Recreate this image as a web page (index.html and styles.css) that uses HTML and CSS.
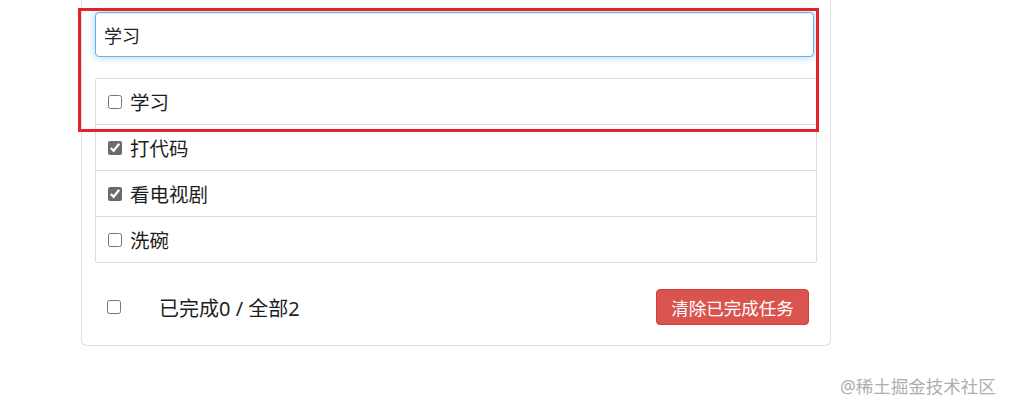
FILE: index.html
```html
<!DOCTYPE html>
<html lang="zh-CN">
<head>
<meta charset="utf-8">
<title>Todo</title>
<link rel="stylesheet" href="styles.css">
</head>
<body>
<div class="page">
  <div class="todo">
    <input class="todo-input" type="text" value="学习">
    <ul class="todo-list">
      <li class="todo-item"><input type="checkbox" class="chk"><span>学习</span></li>
      <li class="todo-item"><input type="checkbox" class="chk" checked><span>打代码</span></li>
      <li class="todo-item"><input type="checkbox" class="chk" checked><span>看电视剧</span></li>
      <li class="todo-item"><input type="checkbox" class="chk"><span>洗碗</span></li>
    </ul>
    <div class="todo-footer">
      <label class="footer-left"><input type="checkbox" class="chk"><span class="footer-text">已完成0 / 全部2</span></label>
      <button class="btn-danger" type="button">清除已完成任务</button>
    </div>
  </div>
  <div class="highlight"></div>
  <div class="watermark">@稀土掘金技术社区</div>
</div>
</body>
</html>
```
FILE: styles.css
```css
* { box-sizing: border-box; }
html, body {
  margin: 0;
  padding: 0;
  background: #fff;
  font-family: "Noto Sans", "Noto Sans CJK SC", sans-serif;
  color: #333;
}
.page {
  position: relative;
  width: 1015px;
  height: 411px;
  overflow: hidden;
}
.todo {
  margin-left: 81px;
  width: 750px;
  border: 1px solid #ddd;
  border-top: none;
  border-radius: 0 0 6px 6px;
  padding: 12px 13px 20px 13px;
}
.todo-input {
  display: block;
  width: 719px;
  height: 45px;
  padding: 0 8px;
  font-family: inherit;
  font-size: 18px;
  color: #222;
  border: 1px solid #66afe9;
  border-radius: 4px;
  outline: none;
  box-shadow: inset 0 1px 1px rgba(0,0,0,.075), 0 0 8px rgba(102,175,233,.6);
}
.todo-list {
  list-style: none;
  margin: 21px 0 0 0;
  padding: 0;
  border: 1px solid #ddd;
  border-radius: 2px;
}
.todo-item {
  display: flex;
  align-items: center;
  height: 46px;
  padding-left: 12px;
  border-bottom: 1px solid #ddd;
  font-size: 19.5px;
  color: #1e1e1e;
}
.todo-item:last-child {
  height: 45px;
  border-bottom: none;
}
.chk {
  width: 14px;
  height: 14px;
  margin: 0 8px 0 0;
  accent-color: #6b6b6b;
}
.todo-footer {
  display: flex;
  align-items: center;
  justify-content: space-between;
  margin-top: 26px;
  padding: 0 8px 0 12px;
}
.footer-left {
  display: flex;
  align-items: center;
}
.footer-left .chk {
  margin-right: 38px;
}
.footer-text {
  font-size: 20px;
  color: #1e1e1e;
}
.btn-danger {
  width: 153px;
  height: 36px;
  padding: 0;
  font-family: inherit;
  font-size: 17.5px;
  color: #fff;
  background: #d9534f;
  border: 1px solid #d43f3a;
  border-radius: 4px;
}
.highlight {
  position: absolute;
  left: 78px;
  top: 8px;
  width: 741px;
  height: 124px;
  border: 3px solid #e3222b;
  pointer-events: none;
}
.watermark {
  position: absolute;
  left: 840px;
  top: 373px;
  font-size: 17.5px;
  color: #aeaeae;
  white-space: nowrap;
}
```
